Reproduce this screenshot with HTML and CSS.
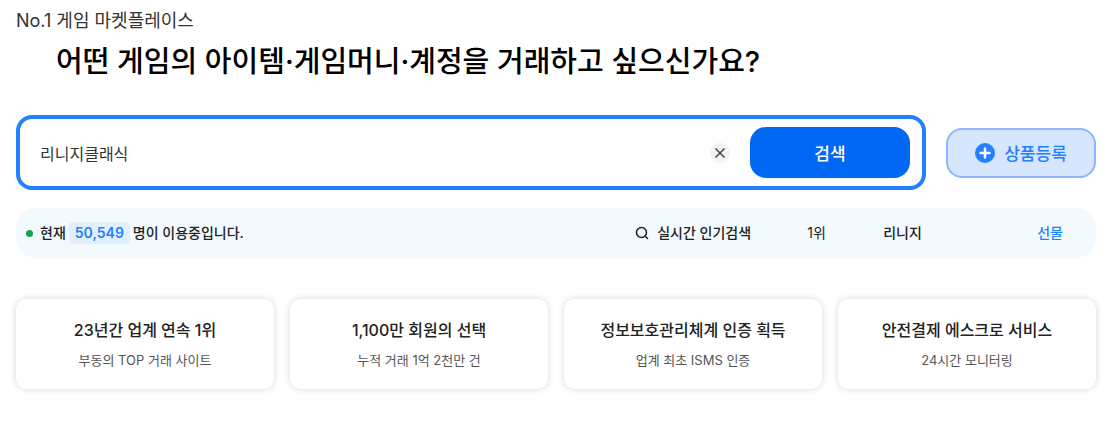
FILE: index.html
```
<!DOCTYPE html>
<html lang="ko">
<head>
    <meta charset="UTF-8">
    <meta name="viewport" content="width=device-width, initial-scale=1.0">
    <title>게임 마켓플레이스</title>
    <link rel="stylesheet" href="styles.css">
</head>
<body>
    <main class="container">
        <p class="slogan">No.1 게임 마켓플레이스</p>
        <h1 class="title"><label for="keyword">어떤 게임의 아이템·게임머니·계정을 거래하고 싶으신가요?</label></h1>

        <div class="search-row">
            <form class="search-box">
                <input type="text" id="keyword" class="search-input" value="리니지클래식">
                <button type="reset" class="clear-btn" aria-label="지우기">
                    <svg width="20" height="20" viewBox="0 0 20 20" fill="none" stroke="#444" stroke-width="1.5">
                        <path d="M5.5 5.5l9 9M14.5 5.5l-9 9"/>
                    </svg>
                </button>
                <button type="submit" class="search-btn">검색</button>
            </form>
            <button type="button" class="register-btn">
                <svg width="20" height="20" viewBox="0 0 20 20">
                    <circle cx="10" cy="10" r="10" fill="#2380ff"/>
                    <path d="M10 5.5v9M5.5 10h9" stroke="#fff" stroke-width="2.5" stroke-linecap="round"/>
                </svg>
                상품등록
            </button>
        </div>

        <div class="status-bar">
            <p class="users">
                <span class="dot"></span>
                <span>현재</span>
                <strong class="count">50,549</strong>
                <span>명이 이용중입니다.</span>
            </p>
            <div class="ranking">
                <svg class="search-icon" width="14" height="14" viewBox="0 0 14 14" fill="none" stroke="#222" stroke-width="1.6" stroke-linecap="round">
                    <circle cx="6.5" cy="6.5" r="5"/>
                    <path d="M10.2 10.2l2.3 2.3"/>
                </svg>
                <span class="rank-label">실시간 인기검색</span>
                <span class="rank-num">1위</span>
                <span class="rank-game">리니지</span>
                <a href="#" class="gift">선물</a>
            </div>
        </div>

        <ul class="cards">
            <li class="card">
                <h2 class="card-title">23년간 업계 연속 1위</h2>
                <p class="card-text">부동의 TOP 거래 사이트</p>
            </li>
            <li class="card">
                <h2 class="card-title">1,100만 회원의 선택</h2>
                <p class="card-text">누적 거래 1억 2천만 건</p>
            </li>
            <li class="card">
                <h2 class="card-title">정보보호관리체계 인증 획득</h2>
                <p class="card-text">업계 최초 ISMS 인증</p>
            </li>
            <li class="card">
                <h2 class="card-title">안전결제 에스크로 서비스</h2>
                <p class="card-text">24시간 모니터링</p>
            </li>
        </ul>
    </main>
</body>
</html>
```
FILE: styles.css
```
* {
    box-sizing: border-box;
}

body {
    margin: 0;
    background: #fff;
    color: #222;
    font-family: Inter, "Noto Sans CJK KR", sans-serif;
}

h1, h2, p, ul {
    margin: 0;
    padding: 0;
}

button, input {
    border: none;
    padding: 0;
    font-family: inherit;
}

button {
    cursor: pointer;
}

.container {
    padding: 8px 18px 36px 16px;
}

.slogan {
    font-size: 18px;
    line-height: 26px;
    color: #333;
}

.title {
    padding-left: 40px;
    font-size: 29px;
    font-weight: 500;
    line-height: 56px;
    color: #000;
}

/* search */
.search-row {
    display: flex;
    align-items: center;
    gap: 20px;
    margin-top: 25px;
}

.search-box {
    flex: 1;
    display: flex;
    align-items: center;
    gap: 20px;
    padding: 8px 12px 8px 20px;
    border: 4px solid #2380ff;
    border-radius: 16px;
}

.search-input {
    flex: 1;
    min-width: 0;
    height: 40px;
    font-size: 16px;
    color: #333;
    background: none;
    outline: none;
}

.clear-btn {
    width: 20px;
    height: 20px;
    border-radius: 50%;
    background: #f2f2f2;
}

.clear-btn svg {
    display: block;
}

.search-btn {
    width: 160px;
    height: 51px;
    border-radius: 16px;
    background: #0068f3;
    color: #fff;
    font-size: 17px;
    font-weight: 500;
}

.register-btn {
    display: flex;
    align-items: center;
    justify-content: center;
    gap: 9px;
    width: 150px;
    height: 50px;
    border: 2px solid #8fb6ff;
    border-radius: 16px;
    background: #d5e6fd;
    color: #2380ff;
    font-size: 17px;
    font-weight: 500;
}

/* status bar */
.status-bar {
    display: flex;
    align-items: center;
    justify-content: space-between;
    height: 50px;
    margin-top: 18px;
    padding: 0 33px 0 10px;
    border-radius: 20px;
    background: #f2f9ff;
    font-size: 14px;
    font-weight: 500;
    line-height: 22px;
}

.users {
    display: flex;
    align-items: center;
    gap: 3px;
}

.dot {
    width: 7px;
    height: 7px;
    margin-right: 4px;
    border-radius: 50%;
    background: #12a150;
}

.count {
    padding: 0 6px;
    border-radius: 4px;
    background: #e0f0fe;
    color: #2380ff;
    font-weight: 600;
}

.ranking {
    display: flex;
    align-items: center;
}

.search-icon {
    margin-right: 8px;
}

.rank-label {
    width: 150px;
}

.rank-num {
    width: 76px;
    font-weight: 400;
}

.rank-game {
    width: 154px;
}

.gift {
    color: #2380ff;
    text-decoration: none;
}

/* cards */
.cards {
    display: grid;
    grid-template-columns: repeat(4, 1fr);
    gap: 16px;
    margin-top: 41px;
    list-style: none;
}

.card {
    padding: 19px 10px 18px;
    border-radius: 10px;
    box-shadow: 0 0 6px rgba(0, 0, 0, 0.17);
    text-align: center;
}

.card-title {
    font-size: 16px;
    font-weight: 500;
    line-height: 24px;
}

.card-text {
    margin-top: 7px;
    color: #555;
    font-size: 13px;
    line-height: 22px;
}
```
